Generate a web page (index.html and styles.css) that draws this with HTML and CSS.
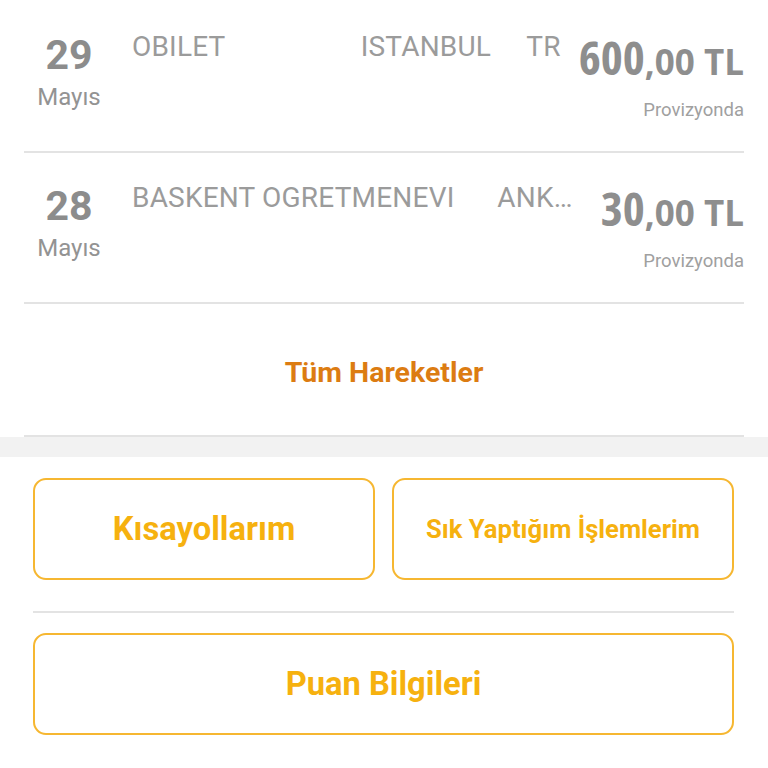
FILE: index.html
```html
<!DOCTYPE html>
<html lang="tr">
<head>
    <meta charset="UTF-8">
    <meta name="viewport" content="width=device-width, initial-scale=1.0">
    <title>Son Hareketler</title>
    <link rel="stylesheet" href="styles.css">
</head>
<body>
    <div class="list">
        <div class="row">
            <div class="date">
                <div class="day">29</div>
                <div class="month">Mayıs</div>
            </div>
            <div class="merchant">OBILET                   ISTANBUL     TR</div>
            <div class="amount-col">
                <div class="amount">600<span class="decimals">,00 TL</span></div>
                <div class="status">Provizyonda</div>
            </div>
        </div>
        <div class="row">
            <div class="date">
                <div class="day">28</div>
                <div class="month">Mayıs</div>
            </div>
            <div class="merchant">BASKENT OGRETMENEVI      ANKARA       TR</div>
            <div class="amount-col">
                <div class="amount">30<span class="decimals">,00 TL</span></div>
                <div class="status">Provizyonda</div>
            </div>
        </div>
        <div class="all-link">Tüm Hareketler</div>
    </div>

    <div class="band"></div>

    <div class="actions">
        <div class="button-grid">
            <div class="button">Kısayollarım</div>
            <div class="button small">Sık Yaptığım İşlemlerim</div>
        </div>
        <div class="divider"></div>
        <div class="button">Puan Bilgileri</div>
    </div>
</body>
</html>
```

FILE: styles.css
```css
body {
    margin: 0;
    background: #fff;
    font-family: Roboto, "Liberation Sans", sans-serif;
}
.list {
    padding: 2px 24px 0 24px;
}
.row {
    display: flex;
    align-items: flex-start;
    height: 149px;
    border-bottom: 2px solid #e3e3e3;
}
.date {
    width: 90px;
    padding-top: 33px;
    text-align: center;
    color: #8c8c8c;
}
.day {
    font-size: 41px;
    line-height: 41px;
    font-weight: 700;
}
.month {
    margin-top: 9px;
    font-size: 24px;
    line-height: 24px;
    color: #939393;
}
.merchant {
    flex: 1;
    min-width: 0;
    margin-left: 18px;
    margin-right: 2px;
    padding-top: 31px;
    font-size: 28px;
    line-height: 28px;
    letter-spacing: 0.2px;
    color: #9b9b9b;
    white-space: pre;
    overflow: hidden;
    text-overflow: ellipsis;
}
.amount-col {
    width: 166px;
    flex-shrink: 0;
    text-align: right;
    padding-top: 32px;
}
.amount {
    font-family: "Open Sans", Roboto, sans-serif;
    font-stretch: 75%;
    font-weight: 700;
    font-size: 47px;
    line-height: 46px;
    color: #8e8e8e;
    white-space: nowrap;
}
.decimals {
    font-stretch: 100%;
    font-size: 35px;
}
.status {
    margin-top: 16px;
    font-size: 18.5px;
    line-height: 18px;
    color: #a0a0a0;
}
.all-link {
    padding: 55px 0 48px;
    font-size: 28.5px;
    line-height: 28px;
    font-weight: 700;
    text-align: center;
    color: #dc7c12;
    border-bottom: 2px solid #e3e3e3;
}
.band {
    height: 20px;
    background: #f2f2f2;
}
.actions {
    padding: 21px 34px 0 33px;
}
.button-grid {
    display: grid;
    grid-template-columns: 1fr 1fr;
    gap: 17px;
}
.button {
    box-sizing: border-box;
    height: 102px;
    display: flex;
    align-items: center;
    justify-content: center;
    border: 2px solid #f6b731;
    border-radius: 13px;
    font-size: 32.7px;
    font-weight: 700;
    color: #f6b10f;
}
.button.small {
    font-size: 25.6px;
}
.divider {
    height: 2px;
    background: #e3e3e3;
    margin: 31px 0 20px;
}
```
